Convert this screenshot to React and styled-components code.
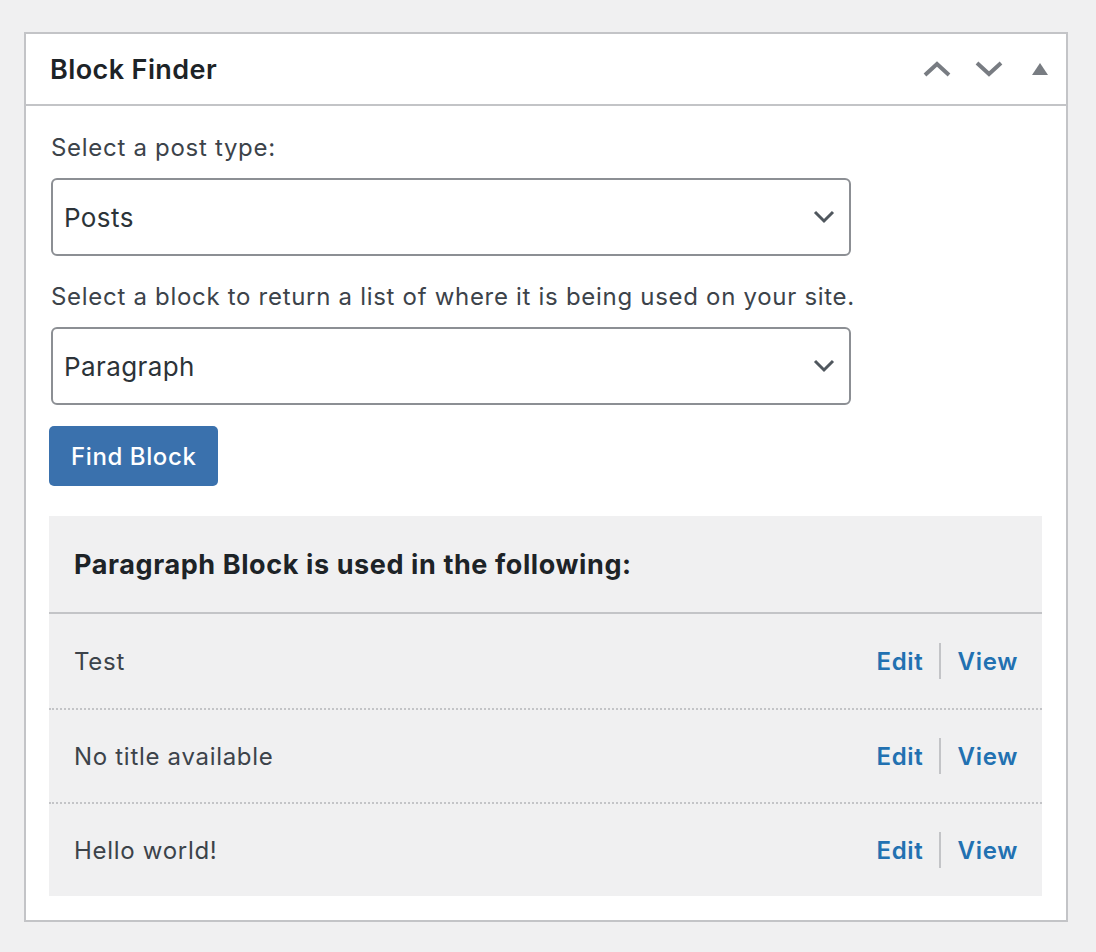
import React from "react";
import styled, { createGlobalStyle } from "styled-components";

const Global = createGlobalStyle`
  html, body { margin: 0; padding: 0; background: #f0f0f1; }
  body { font-family: Inter, "Noto Sans", sans-serif; color: #3c434a; }
  * { box-sizing: border-box; }
`;

const Page = styled.div`
  padding: 32px 28px 32px 24px;
`;

const Panel = styled.section`
  background: #fff;
  border: 2px solid #c3c4c7;
  width: 1044px;
`;

const Header = styled.header`
  height: 72px;
  display: flex;
  align-items: center;
  justify-content: space-between;
  border-bottom: 2px solid #c3c4c7;
  padding: 0 18px 0 24px;
`;

const Title = styled.h2`
  margin: 0;
  font-size: 27px;
  letter-spacing: 0.4px;
  font-weight: 600;
  color: #1d2327;
`;

const Controls = styled.div`
  display: flex;
  align-items: center;
  gap: 24px;
`;

const IconBtn = styled.span`
  display: flex;
  justify-content: center;
  color: #787c82;
  margin-left: ${(p) => p.$ml || 0}px;
`;

const Body = styled.div`
  padding: 26px 24px 24px 23px;
  display: flex;
  flex-direction: column;
  align-items: flex-start;
`;

const Label = styled.label`
  font-size: 24px;
  letter-spacing: 0.7px;
  line-height: 32px;
  margin-top: ${(p) => p.$mt || 0}px;
  margin-left: 2px;
`;

const SelectBox = styled.div`
  margin: 14px 0 0 2px;
  width: 800px;
  height: 78px;
  border: 2px solid #8c8f94;
  border-radius: 6px;
  display: flex;
  align-items: center;
  justify-content: space-between;
  padding: 0 14px 0 11px;
  font-size: 26px;
  letter-spacing: 0.4px;
  color: #2c3338;
`;

const Button = styled.button`
  margin-top: 21px;
  height: 60px;
  padding: 0 22px;
  background: #3a71ad;
  border: none;
  border-radius: 5px;
  color: #fff;
  font-family: inherit;
  font-size: 24px;
  letter-spacing: 0.6px;
  font-weight: 500;
`;

const Results = styled.div`
  margin-top: 30px;
  width: 100%;
  background: #f0f0f1;
`;

const ResultsHead = styled.div`
  height: 98px;
  border-bottom: 2px solid #c3c4c7;
  display: flex;
  align-items: center;
  padding: 0 25px;
  font-size: 27px;
  letter-spacing: 0.6px;
  font-weight: 700;
  color: #1d2327;
`;

const Row = styled.div`
  height: 94px;
  display: flex;
  align-items: center;
  justify-content: space-between;
  padding: 0 24px 0 25px;
  font-size: 24px;
  letter-spacing: 0.7px;
  border-top: ${(p) => (p.$first ? "none" : "2px dotted #c3c4c7")};
`;

const Actions = styled.div`
  display: flex;
  align-items: center;
`;

const Link = styled.a`
  color: #2271b1;
  font-weight: 600;
  font-size: 24px;
  letter-spacing: 0.7px;
  text-decoration: none;
`;

const Sep = styled.span`
  width: 2px;
  height: 36px;
  background: #c3c4c7;
  margin: 0 16px;
`;

const Chevron = ({ up }) => (
  <svg width="28" height="16" viewBox="0 0 28 16">
    <path
      d={up ? "M2 14 L14 3 L26 14" : "M2 2 L14 13 L26 2"}
      fill="none"
      stroke="currentColor"
      strokeWidth="4"
    />
  </svg>
);

const Triangle = () => (
  <svg width="16" height="12" viewBox="0 0 16 12">
    <path d="M8 0 L16 12 L0 12 Z" fill="currentColor" />
  </svg>
);

const Caret = () => (
  <svg width="22" height="14" viewBox="0 0 22 14">
    <path d="M2 2 L11 11 L20 2" fill="none" stroke="#50575e" strokeWidth="3" />
  </svg>
);

const rows = ["Test", "No title available", "Hello world!"];

export default function App() {
  return (
    <>
      <Global />
      <Page>
        <Panel>
          <Header>
            <Title>Block Finder</Title>
            <Controls>
              <IconBtn><Chevron up /></IconBtn>
              <IconBtn><Chevron /></IconBtn>
              <IconBtn $ml={5}><Triangle /></IconBtn>
            </Controls>
          </Header>
          <Body>
            <Label>Select a post type:</Label>
            <SelectBox>
              <span>Posts</span>
              <Caret />
            </SelectBox>
            <Label $mt={25}>
              Select a block to return a list of where it is being used on your site.
            </Label>
            <SelectBox>
              <span>Paragraph</span>
              <Caret />
            </SelectBox>
            <Button>Find Block</Button>
            <Results>
              <ResultsHead>Paragraph Block is used in the following:</ResultsHead>
              {rows.map((r, i) => (
                <Row key={r} $first={i === 0}>
                  <span>{r}</span>
                  <Actions>
                    <Link href="#">Edit</Link>
                    <Sep />
                    <Link href="#">View</Link>
                  </Actions>
                </Row>
              ))}
            </Results>
          </Body>
        </Panel>
      </Page>
    </>
  );
}
